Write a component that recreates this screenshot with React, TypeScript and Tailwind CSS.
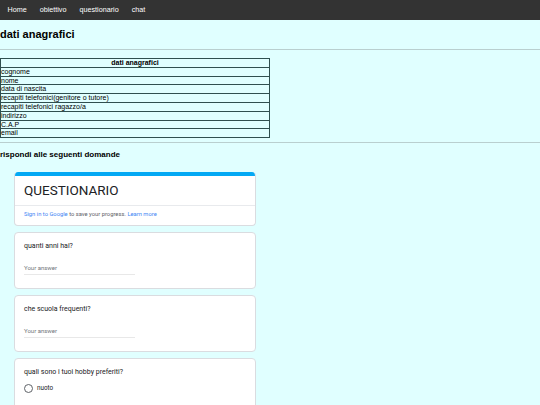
const navItems = ["Home", "obiettivo", "questionario", "chat"];

const rows = [
  "cognome",
  "nome",
  "data di nascita",
  "recapiti telefonici(genitore o tutore)",
  "recapiti telefonici ragazzo/a",
  "indirizzo",
  "C.A.P",
  "email",
];

const TextQuestion = ({ title }: { title: string }) => (
  <div className="flex h-[57px] flex-col rounded-[4px] border border-[#dadce0] bg-white px-[9px] pt-[9px]">
    <p className="text-[7px] leading-[8px] text-[#202124]">{title}</p>
    <div className="mt-[14px] w-[111px] border-b border-[#e8e8e8] pb-[3px] text-[6px] leading-[7px] text-[#70757a]">
      Your answer
    </div>
  </div>
);

export default function App() {
  return (
    <div className="min-h-[405px] overflow-hidden bg-[#e0ffff] font-['Liberation_Sans',Arial,sans-serif] text-black">
      <nav className="flex h-[20px] items-center bg-[#333333] pl-[1px]">
        {navItems.map((item) => (
          <a key={item} className="px-[6.5px] text-[7.2px] text-white">
            {item}
          </a>
        ))}
      </nav>

      <h2 className="mt-[8px] text-[11px] font-bold leading-[12px]">
        dati anagrafici
      </h2>
      <hr className="mt-[9px] border-t border-[#b9cfcf]" />

      <table className="mt-[8px] w-[270px] border-collapse border border-[#2f4f4f] text-[7px] leading-[7.8px]">
        <thead>
          <tr>
            <th className="border border-[#2f4f4f] p-0 font-bold">dati anagrafici</th>
          </tr>
        </thead>
        <tbody>
          {rows.map((row) => (
            <tr key={row}>
              <td className="border border-[#2f4f4f] p-0">{row}</td>
            </tr>
          ))}
        </tbody>
      </table>

      <hr className="mt-[4px] border-t border-[#b9cfcf]" />
      <p className="mt-[7px] text-[8px] font-bold leading-[9px]">rispondi alle seguenti domande</p>

      <section className="ml-[14px] mt-[13px] flex w-[242px] flex-col gap-[6px] font-['Roboto',Arial,sans-serif]">
        <div className="flex h-[54px] flex-col overflow-hidden rounded-[4px] border border-t-0 border-[#dadce0] bg-white">
          <div className="h-[4px] bg-[#03a9f4]" />
          <div className="h-[29px] px-[9px] pt-[5px] text-[13.5px] leading-[18px] text-[#202124]">
            QUESTIONARIO
          </div>
          <div className="border-t border-[#e8eaed] px-[9px] pt-[4px] text-[5.8px] leading-[8px] text-[#5f6368]">
            <span className="text-[#4285f4]">Sign in to Google</span> to save your progress.{" "}
            <span className="text-[#4285f4]">Learn more</span>
          </div>
        </div>

        <TextQuestion title="quanti anni hai?" />
        <TextQuestion title="che scuola frequenti?" />

        <div className="flex h-[57px] flex-col rounded-[4px] border border-[#dadce0] bg-white px-[9px] pt-[9px]">
          <p className="text-[7px] leading-[8px] text-[#202124]">quali sono i tuoi hobby preferiti?</p>
          <div className="mt-[8px] flex items-center gap-[4px]">
            <span className="h-[9px] w-[9px] rounded-full border border-[#5f6368]" />
            <span className="text-[6.3px] text-[#202124]">nuoto</span>
          </div>
        </div>
      </section>
    </div>
  );
}
